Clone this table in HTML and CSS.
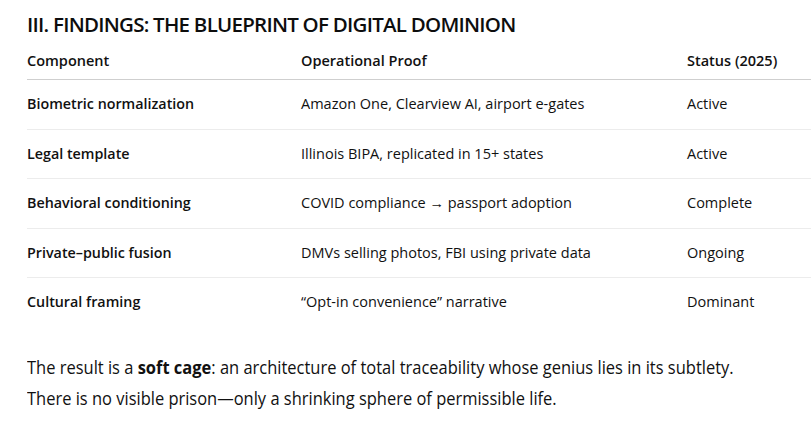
FILE: index.html
```html
<!DOCTYPE html>
<html lang="en">
<head>
<meta charset="utf-8">
<title>Findings</title>
<link rel="stylesheet" href="styles.css">
</head>
<body>
<main class="page">
  <h2 class="title">III. FINDINGS: THE BLUEPRINT OF DIGITAL DOMINION</h2>
  <table class="findings">
    <colgroup>
      <col class="c1"><col class="c2"><col class="c3">
    </colgroup>
    <thead>
      <tr><th>Component</th><th>Operational Proof</th><th>Status (2025)</th></tr>
    </thead>
    <tbody>
      <tr><td class="name">Biometric normalization</td><td>Amazon One, Clearview AI, airport e-gates</td><td>Active</td></tr>
      <tr><td class="name">Legal template</td><td>Illinois BIPA, replicated in 15+ states</td><td>Active</td></tr>
      <tr><td class="name">Behavioral conditioning</td><td>COVID compliance → passport adoption</td><td>Complete</td></tr>
      <tr><td class="name">Private–public fusion</td><td>DMVs selling photos, FBI using private data</td><td>Ongoing</td></tr>
      <tr><td class="name">Cultural framing</td><td>“Opt-in convenience” narrative</td><td>Dominant</td></tr>
    </tbody>
  </table>
  <p class="summary">The result is a <strong>soft cage</strong>: an architecture of total traceability whose genius lies in its subtlety.<br>There is no visible prison—only a shrinking sphere of permissible life.</p>
</main>
</body>
</html>
```

FILE: styles.css
```css
html, body {
  margin: 0;
  padding: 0;
  background: #ffffff;
}
body {
  overflow: hidden;
  font-family: "Open Sans", "Noto Sans", sans-serif;
  color: #111111;
}
.page {
  padding-left: 27px;
}
.title {
  margin: 0;
  padding-top: 10px;
  font-size: 20.5px;
  letter-spacing: -0.75px;
  line-height: 28px;
  font-weight: 600;
  color: #0d0d0d;
}
.findings {
  margin-top: 13px;
  width: 820px;
  border-collapse: collapse;
  table-layout: fixed;
  font-size: 14.5px;
}
.c1 { width: 274px; }
.c2 { width: 386px; }
.c3 { width: 160px; }
.findings th {
  text-align: left;
  font-weight: 600;
  padding: 0 0 8px 0;
  line-height: 20px;
  border-bottom: 1px solid #cfcfcf;
}
.findings td {
  padding: 14px 0 14.5px 0;
  line-height: 20px;
  border-bottom: 1px solid #ececec;
}
.findings tbody tr:last-child td {
  border-bottom: none;
}
.findings td.name {
  font-weight: 600;
  font-size: 14.3px;
}
.summary {
  margin: 25px 0 0 0;
  font-size: 18px;
  line-height: 31px;
  white-space: nowrap;
  transform: scaleX(0.915);
  transform-origin: left center;
}
.summary strong {
  font-weight: 700;
}
```
